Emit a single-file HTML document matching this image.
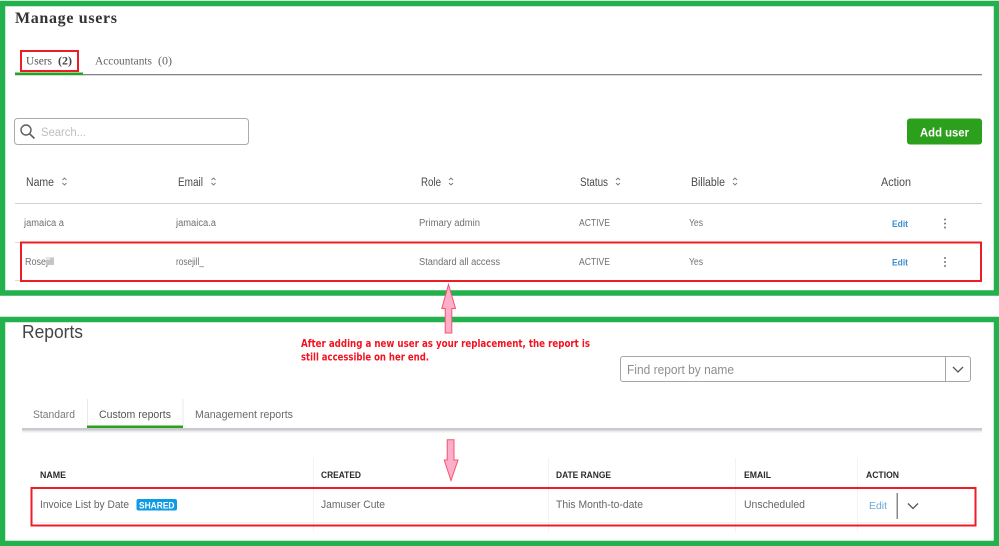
<!DOCTYPE html>
<html lang="en">
<head>
<meta charset="utf-8">
<title>Manage users and Reports</title>
<style>
html,body{margin:0;padding:0;background:#fff;width:999px;height:546px;overflow:hidden}
svg{display:block;filter:blur(0.3px)}
text{font-family:"Liberation Sans",sans-serif;white-space:pre}
.s{font-family:"Liberation Serif",serif}
.c{font-family:"DejaVu Sans",sans-serif;font-weight:700;font-size:11px;fill:#f2131f}
.h{font-size:11.5px;fill:#4a4a4a}
.r{font-size:10px;fill:#707070}
.t{font-size:11px;fill:#6a6a6a}
.b{font-size:9px;font-weight:700;fill:#2a2a2a}
.d{font-size:11px;fill:#666}
</style>
</head>
<body>
<svg width="999" height="546" viewBox="0 0 999 546" xmlns="http://www.w3.org/2000/svg">
<rect width="999" height="546" fill="#fff"/>

<!-- green frames -->
<rect x="2.5" y="3.5" width="994" height="289.5" fill="none" stroke="#22b14c" stroke-width="5.5"/>
<rect x="2.5" y="319.5" width="994" height="224" fill="none" stroke="#22b14c" stroke-width="5.5"/>

<!-- Manage users -->
<text class="s" x="15" y="23" font-size="16" font-weight="700" fill="#333" textLength="102" lengthAdjust="spacing">Manage users</text>
<rect x="15" y="74" width="967" height="1.3" fill="#85868a"/>
<rect x="15" y="72.5" width="68" height="2.5" fill="#1fa81f"/>
<rect x="21" y="51" width="57" height="20" fill="none" stroke="#ee1c25" stroke-width="2"/>
<text class="s" x="26" y="64.5" font-size="12" fill="#555" textLength="26" lengthAdjust="spacingAndGlyphs">Users</text>
<text class="s" x="58" y="64.5" font-size="12" font-weight="700" fill="#444" textLength="14" lengthAdjust="spacingAndGlyphs">(2)</text>
<text class="s" x="95" y="64.5" font-size="12" fill="#666" textLength="57" lengthAdjust="spacingAndGlyphs">Accountants</text>
<text class="s" x="158" y="64.5" font-size="12" fill="#666" textLength="14" lengthAdjust="spacingAndGlyphs">(0)</text>

<!-- Search -->
<rect x="14.5" y="118.5" width="234" height="26" rx="3" fill="#fff" stroke="#a9abb0"/>
<circle cx="26" cy="130" r="5" fill="none" stroke="#5a5c60" stroke-width="1.4"/>
<path d="M29.6 133.8 L34 138" fill="none" stroke="#5a5c60" stroke-width="1.6" stroke-linecap="round"/>
<text x="41" y="136" font-size="11.5" fill="#bcbec2" textLength="45" lengthAdjust="spacingAndGlyphs">Search...</text>

<!-- Add user -->
<rect x="907" y="118.5" width="75" height="26" rx="3" fill="#2ca01c"/>
<text x="920" y="136.5" font-size="12" font-weight="700" fill="#fff" textLength="49" lengthAdjust="spacingAndGlyphs">Add user</text>

<!-- users headers -->
<text class="h" x="26" y="186" textLength="28" lengthAdjust="spacingAndGlyphs">Name</text>
<text class="h" x="178" y="186" textLength="25" lengthAdjust="spacingAndGlyphs">Email</text>
<text class="h" x="421" y="186" textLength="20" lengthAdjust="spacingAndGlyphs">Role</text>
<text class="h" x="580" y="186" textLength="28" lengthAdjust="spacingAndGlyphs">Status</text>
<text class="h" x="691" y="186" textLength="34" lengthAdjust="spacingAndGlyphs">Billable</text>
<text class="h" x="881" y="186" textLength="30" lengthAdjust="spacingAndGlyphs">Action</text>
<g fill="none" stroke="#777" stroke-width="0.9">
<path d="M62.5 180 L64.5 178 L66.5 180 M62.5 183 L64.5 185 L66.5 183"/>
<path d="M211.5 180 L213.5 178 L215.5 180 M211.5 183 L213.5 185 L215.5 183"/>
<path d="M449 180 L451 178 L453 180 M449 183 L451 185 L453 183"/>
<path d="M616 180 L618 178 L620 180 M616 183 L618 185 L620 183"/>
<path d="M733 180 L735 178 L737 180 M733 183 L735 185 L737 183"/>
</g>
<rect x="15" y="203" width="967" height="1" fill="#cfd0d8"/>

<!-- user rows -->
<text class="r" x="24" y="226" textLength="40" lengthAdjust="spacingAndGlyphs">jamaica a</text>
<text class="r" x="176" y="226" textLength="40" lengthAdjust="spacingAndGlyphs">jamaica.a</text>
<text class="r" x="419" y="226" textLength="61" lengthAdjust="spacingAndGlyphs">Primary admin</text>
<text class="r" x="579" y="226" textLength="31" lengthAdjust="spacingAndGlyphs">ACTIVE</text>
<text class="r" x="689" y="226" textLength="14" lengthAdjust="spacingAndGlyphs">Yes</text>
<text x="892" y="227" font-size="9.5" font-weight="700" fill="#3b8fd0" textLength="16" lengthAdjust="spacingAndGlyphs">Edit</text>
<g fill="#777"><circle cx="945" cy="219.5" r="1"/><circle cx="945" cy="223.5" r="1"/><circle cx="945" cy="227.5" r="1"/>
<circle cx="945" cy="258" r="1"/><circle cx="945" cy="262" r="1"/><circle cx="945" cy="266" r="1"/></g>
<rect x="15" y="242" width="6" height="1" fill="#ddd"/>
<rect x="15" y="280" width="6" height="1" fill="#ddd"/>
<rect x="21" y="242.5" width="960" height="38.5" fill="none" stroke="#ee1c25" stroke-width="2"/>
<text class="r" x="25" y="265" textLength="29" lengthAdjust="spacingAndGlyphs">Rosejill</text>
<text class="r" x="176" y="265" textLength="28" lengthAdjust="spacingAndGlyphs">rosejill_</text>
<text class="r" x="419" y="265" textLength="81" lengthAdjust="spacingAndGlyphs">Standard all access</text>
<text class="r" x="579" y="265" textLength="31" lengthAdjust="spacingAndGlyphs">ACTIVE</text>
<text class="r" x="689" y="265" textLength="14" lengthAdjust="spacingAndGlyphs">Yes</text>
<text x="892" y="265.5" font-size="9.5" font-weight="700" fill="#3b8fd0" textLength="16" lengthAdjust="spacingAndGlyphs">Edit</text>

<!-- Reports -->
<text x="22" y="338" font-size="18" fill="#444" textLength="61" lengthAdjust="spacingAndGlyphs">Reports</text>
<text class="c" x="301" y="347" textLength="289" lengthAdjust="spacingAndGlyphs">After adding a new user as your replacement, the report is</text>
<text class="c" x="301" y="360.5" textLength="128" lengthAdjust="spacingAndGlyphs">still accessible on her end.</text>

<!-- Find report -->
<rect x="620.5" y="356.5" width="350" height="25" rx="2.5" fill="#fff" stroke="#a5a6aa"/>
<rect x="945" y="356.5" width="1" height="25" fill="#a5a6aa"/>
<path d="M953 367 L958 372 L963 367" fill="none" stroke="#555" stroke-width="1.3"/>
<text x="627" y="374" font-size="12.5" fill="#8d8f93" textLength="107" lengthAdjust="spacingAndGlyphs">Find report by name</text>

<!-- Report tabs -->
<rect x="87" y="399" width="1" height="27" fill="#eaeaec"/>
<rect x="182.5" y="399" width="1" height="27" fill="#eaeaec"/>
<rect x="22" y="428" width="960" height="2.5" fill="#c8c9cf"/>
<rect x="22" y="430.5" width="960" height="2" fill="#ececef"/>
<rect x="87" y="425.5" width="96" height="2.5" fill="#2ca01c"/>
<text class="t" x="33" y="418" textLength="42" lengthAdjust="spacingAndGlyphs" style="fill:#7a7a7a">Standard</text>
<text class="t" x="99" y="418" textLength="72" lengthAdjust="spacingAndGlyphs" style="fill:#555">Custom reports</text>
<text class="t" x="195" y="418" textLength="98" lengthAdjust="spacingAndGlyphs">Management reports</text>

<!-- Report table -->
<g fill="#f3f3f5">
<rect x="313" y="458" width="1" height="74"/>
<rect x="548" y="458" width="1" height="74"/>
<rect x="735" y="458" width="1" height="74"/>
<rect x="857" y="458" width="1" height="74"/>
<rect x="32" y="522" width="943" height="1"/>
</g>
<text class="b" x="40" y="478" textLength="26" lengthAdjust="spacingAndGlyphs">NAME</text>
<text class="b" x="321" y="478" textLength="40" lengthAdjust="spacingAndGlyphs">CREATED</text>
<text class="b" x="556" y="478" textLength="55" lengthAdjust="spacingAndGlyphs">DATE RANGE</text>
<text class="b" x="744" y="478" textLength="27" lengthAdjust="spacingAndGlyphs">EMAIL</text>
<text class="b" x="866" y="478" textLength="33" lengthAdjust="spacingAndGlyphs">ACTION</text>
<rect x="31.5" y="488" width="944" height="37.5" fill="none" stroke="#ee1c25" stroke-width="2"/>
<text class="d" x="40" y="508" textLength="89" lengthAdjust="spacingAndGlyphs">Invoice List by Date</text>
<rect x="136.5" y="499" width="40.5" height="11.5" rx="2" fill="#0d9be6"/>
<text x="139" y="508.5" font-size="9.5" font-weight="700" fill="#fff" textLength="35.5" lengthAdjust="spacingAndGlyphs">SHARED</text>
<text class="d" x="321" y="508" textLength="64" lengthAdjust="spacingAndGlyphs">Jamuser Cute</text>
<text class="d" x="556" y="508" textLength="87" lengthAdjust="spacingAndGlyphs">This Month-to-date</text>
<text class="d" x="744" y="508" textLength="61" lengthAdjust="spacingAndGlyphs">Unscheduled</text>
<text x="869" y="509" font-size="10.5" fill="#6aa9da" textLength="18" lengthAdjust="spacingAndGlyphs">Edit</text>
<rect x="896.5" y="493" width="1.5" height="26" fill="#8a8a8a"/>
<path d="M908 503.5 L913 508.5 L918 503.5" fill="none" stroke="#555" stroke-width="1.3"/>

<!-- Arrows -->
<path d="M448.5 284.5 L455.5 308.5 L451.8 308.5 L451.8 333 L445.2 333 L445.2 308.5 L441.8 308.5 Z" fill="#ffaec9" stroke="#f0566f" stroke-width="1"/>
<path d="M447.2 439.8 L454 439.8 L454 460 L458 460 L451 480.5 L444.2 460 L447.2 460 Z" fill="#ffaec9" stroke="#f0566f" stroke-width="1"/>
</svg>
</body>
</html>
